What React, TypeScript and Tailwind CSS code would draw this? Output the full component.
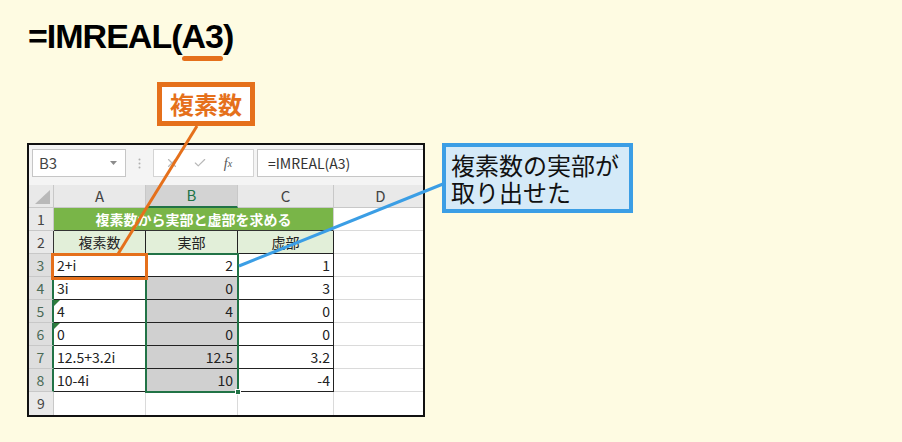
import { Fragment } from "react";
import { Check, X } from "lucide-react";

type Row = { n: number; a: string; b: string; c: string; flag?: boolean };

const rows: Row[] = [
  { n: 3, a: "2+i", b: "2", c: "1" },
  { n: 4, a: "3i", b: "0", c: "3" },
  { n: 5, a: "4", b: "4", c: "0", flag: true },
  { n: 6, a: "0", b: "0", c: "0", flag: true },
  { n: 7, a: "12.5+3.2i", b: "12.5", c: "3.2" },
  { n: 8, a: "10-4i", b: "10", c: "-4" },
];

function FormulaBar() {
  return (
    <div className="h-[40px] bg-[#f4f4f4] flex items-start pt-[4px] pl-[3px]">
      {/* name box */}
      <div className="w-[94px] h-[28px] bg-white border border-[#c6c6c6] flex items-center justify-between pl-[6px] pr-[8px] text-[15px] text-[#444]">
        <span>B3</span>
        <svg width="7" height="4" viewBox="0 0 7 4">
          <path d="M0 0h7L3.5 4z" fill="#8c8c8c" />
        </svg>
      </div>
      <div className="w-[27px] h-[28px] flex items-center justify-center">
        <svg width="3" height="11" viewBox="0 0 3 11">
          <circle cx="1.5" cy="1.5" r="1" fill="#b0b0b0" />
          <circle cx="1.5" cy="5.5" r="1" fill="#b0b0b0" />
          <circle cx="1.5" cy="9.5" r="1" fill="#b0b0b0" />
        </svg>
      </div>
      {/* cancel / enter / insert function */}
      <div className="w-[101px] h-[28px] bg-white border border-[#d4d4d4] flex items-center pl-[4px]">
        <span className="w-[28px] h-[14px] flex items-center justify-center">
          <X size={14} strokeWidth={2} color="#b8b8b8" />
        </span>
        <span className="w-[28px] h-[14px] flex items-center justify-center">
          <Check size={14} strokeWidth={2} color="#b8b8b8" />
        </span>
        <span className="w-[28px] flex justify-center font-['Liberation_Serif',serif] italic text-[14px] text-[#555]">
          f<span className="text-[10px] mt-[3px]">x</span>
        </span>
      </div>
      <div className="ml-[3px] flex-1 h-[28px] bg-white border-y border-l border-[#c6c6c6] pl-[10px] flex items-center text-[14px] text-[#333]">
        =IMREAL(A3)
      </div>
    </div>
  );
}

function Grid() {
  return (
    <div className="relative grid grid-cols-[25px_92px_92px_96px_1fr] grid-rows-[repeat(10,23px)] text-[14px] text-[#222]">
      {/* column headers */}
      <div className="relative bg-[#e9e9e9] border-r border-b border-[#c8c8c8]">
        <svg className="absolute right-[3px] bottom-[3px]" width="15" height="14" viewBox="0 0 15 14">
          <path d="M15 0V14H0z" fill="#b9b9b9" />
        </svg>
      </div>
      <div className="bg-[#e9e9e9] border-r border-b border-[#c8c8c8] flex items-center justify-center text-[15px] text-[#444]">A</div>
      <div className="bg-[#d3d3d3] border-r border-[#c8c8c8] border-b-2 border-b-[#217346] flex items-center justify-center text-[15px] text-[#217346]">B</div>
      <div className="bg-[#e9e9e9] border-r border-b border-[#c8c8c8] flex items-center justify-center text-[15px] text-[#444]">C</div>
      <div className="bg-[#e9e9e9] border-b border-[#c8c8c8] flex items-center justify-center pl-[4px] text-[15px] text-[#444]">D</div>

      {/* row 1: title */}
      <div className="bg-[#e9e9e9] border-r border-b border-[#c8c8c8] flex items-center justify-center text-[#444]">1</div>
      <div className="col-span-3 bg-[#79b548] border-r border-r-[#d0d0d0] border-b border-b-[#333] flex items-center justify-center font-bold text-white">
        複素数から実部と虚部を求める
      </div>
      <div className="border-b border-[#dadada]" />

      {/* row 2: headings */}
      <div className="bg-[#e9e9e9] border-b border-[#c8c8c8] border-r border-r-[#333] flex items-center justify-center text-[#444]">2</div>
      <div className="bg-[#e2efd9] border-r border-b border-[#222] flex items-center justify-center">複素数</div>
      <div className="bg-[#e2efd9] border-r border-b border-[#222] flex items-center justify-center">実部</div>
      <div className="bg-[#e2efd9] border-r border-b border-[#222] flex items-center justify-center">虚部</div>
      <div className="border-b border-[#dadada]" />

      {rows.map((r) => (
        <Fragment key={r.n}>
          <div className="bg-[#dedede] border-b border-[#c8c8c8] border-r-2 border-r-[#217346] flex items-center justify-center text-[#4a6a56]">
            {r.n}
          </div>
          <div className="relative border-r border-b border-[#222] flex items-center pl-[3px]">
            {r.flag && (
              <span className="absolute left-0 top-0 w-0 h-0 border-t-[6px] border-r-[6px] border-t-[#2f7d3c] border-r-transparent" />
            )}
            {r.a}
          </div>
          <div className={r.n === 3 ? "border-r border-b border-[#222] flex items-center justify-end pr-[4px]" : "bg-[#d0d0d0] border-r border-b border-[#222] flex items-center justify-end pr-[4px]"}>
            {r.b}
          </div>
          <div className="border-r border-b border-[#222] flex items-center justify-end pr-[3px]">{r.c}</div>
          <div className="border-b border-[#dadada]" />
        </Fragment>
      ))}

      {/* row 9: empty */}
      <div className="bg-[#e9e9e9] border-r border-[#c8c8c8] flex items-center justify-center text-[#444]">9</div>
      <div className="border-r border-[#dadada]" />
      <div className="border-r border-[#dadada]" />
      <div className="border-r border-[#dadada]" />
      <div />

      {/* selected range B3:B8 */}
      <div className="absolute left-[116px] top-[68px] w-[94px] h-[140px] border-2 border-[#217346] pointer-events-none">
        <div className="absolute -right-[4px] -bottom-[4px] w-[6px] h-[6px] bg-[#217346] border border-white" />
      </div>
    </div>
  );
}

export default function App() {
  return (
    <div className="relative w-[902px] h-[442px] overflow-hidden bg-[#fefbe2] font-['Noto_Sans_CJK_JP',sans-serif]">
      <div className="pl-[28px] pt-[16px]">
        <h1 className="font-['Liberation_Sans',sans-serif] text-[34px] leading-[40px] font-bold tracking-[-1px] text-black">
          =IMREAL(
          <span className="relative">
            A3
            <span className="absolute left-0 right-0 -bottom-[6px] h-[5px] rounded-full bg-[#e5701b]" />
          </span>
          )
        </h1>
      </div>

      <div className="ml-[157px] mt-[26px] w-[98px] h-[44px] border-[5px] border-[#e5701b] bg-white flex items-center justify-center text-[24px] leading-none font-bold text-[#e5701b]">
        複素数
      </div>

      <div className="ml-[27px] mt-[17px] flex items-start gap-[17px]">
        <div className="w-[398px] h-[274px] border-2 border-[#111] bg-white flex flex-col shrink-0">
          <FormulaBar />
          <Grid />
        </div>
        <div className="w-[191px] h-[70px] border-4 border-[#3b9ee5] bg-[#d5eaf8] pl-[5px] pt-[4px] text-[24px] leading-[27px] text-[#111]">
          <div>複素数の実部が</div>
          <div>取り出せた</div>
        </div>
      </div>

      {/* leader lines */}
      <svg className="absolute inset-0 pointer-events-none" width="902" height="442">
        <line x1="197" y1="126" x2="118" y2="254" stroke="#e5701b" strokeWidth="3" />
        <rect x="52.5" y="254.5" width="94" height="24" fill="none" stroke="#e5701b" strokeWidth="3" />
        <line x1="239" y1="266" x2="443" y2="184" stroke="#3b9ee5" strokeWidth="3" />
      </svg>
    </div>
  );
}
